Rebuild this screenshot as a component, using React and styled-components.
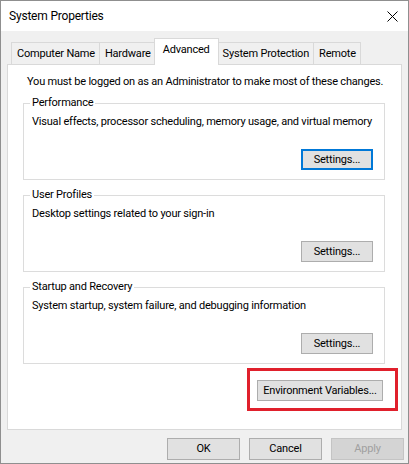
import React from 'react';
import styled, { createGlobalStyle, css } from 'styled-components';

const Global = createGlobalStyle`
    html, body {
        margin: 0;
        padding: 0;
        background: #ffffff;
    }
    * {
        box-sizing: border-box;
    }
`;

const Window = styled.div`
    width: 409px;
    height: 464px;
    border: 1px solid #8f8f8f;
    background: #f0f0f0;
    display: flex;
    flex-direction: column;
    font-family: Roboto, "Liberation Sans", sans-serif;
    font-size: 11px;
    letter-spacing: -0.2px;
    line-height: 16px;
    color: #000;
    overflow: hidden;
`;

const TitleBar = styled.div`
    height: 30px;
    background: #ffffff;
    display: flex;
    align-items: center;
    justify-content: space-between;
    padding: 0 6px 0 8px;
    flex-shrink: 0;
`;

const Title = styled.span`
    font-size: 12px;
`;

const CloseButton = styled.div`
    width: 20px;
    height: 20px;
    display: flex;
    align-items: center;
    justify-content: center;
`;

const Content = styled.div`
    padding: 7px 5px 0 6px;
    display: flex;
    flex-direction: column;
`;

const TabStrip = styled.div`
    display: flex;
    align-items: flex-end;
    height: 26px;
    padding-left: 5px;
`;

const Tab = styled.div`
    height: 22px;
    padding: 0 4px 0 5px;
    margin-left: -1px;
    border: 1px solid #d9d9d9;
    border-bottom: none;
    background: #f0f0f0;
    display: flex;
    align-items: center;
    white-space: nowrap;
    ${props => props.active && css`
        height: 27px;
        margin: 0 -1px -1px -2px;
        padding: 0 8px 4px 8px;
        background: #ffffff;
        position: relative;
        z-index: 1;
    `}
`;

const Panel = styled.div`
    width: 395px;
    height: 366px;
    flex-shrink: 0;
    background: #ffffff;
    border: 1px solid #d9d9d9;
    padding: 9px 3px 0 15px;
    display: flex;
    flex-direction: column;
`;

const Intro = styled.div`
    margin-left: 4px;
    white-space: nowrap;
`;

const Group = styled.fieldset`
    margin: ${props => props.first ? 5 : 7}px 13px 0 0;
    border: 1px solid #dcdcdc;
    padding: 0 11px 9px 8px;
    min-width: 0;
`;

const Legend = styled.legend`
    padding: 0 2px;
    margin-left: -2px;
`;

const Description = styled.div`
    margin-top: 3px;
    white-space: nowrap;
`;

const ButtonRow = styled.div`
    display: flex;
    justify-content: flex-end;
    margin-top: ${props => props.gap === undefined ? 19 : props.gap}px;
`;

const Button = styled.button`
    width: ${props => props.width || 73}px;
    height: ${props => props.height || 21}px;
    background: #e1e1e1;
    border: 1px solid #adadad;
    font-family: inherit;
    font-size: inherit;
    letter-spacing: inherit;
    line-height: 16px;
    color: #000;
    padding: 0;
    white-space: nowrap;
    ${props => props.focused && css`
        border: 2px solid #0078d7;
    `}
    ${props => props.disabled && css`
        background: #d4d4d4;
        border-color: #c4c4c4;
        color: #a0a0a0;
    `}
`;

const Highlight = styled.div`
    border: 3px solid #e0202c;
    padding: 9px 12px 7px 7px;
    margin-top: 4px;
`;

const Footer = styled.div`
    display: flex;
    justify-content: flex-end;
    gap: 9px;
    margin-top: 8px;
    padding-right: 4px;
    margin-right: -5px;
`;

const groups = [
    {
        title: 'Performance',
        text: 'Visual effects, processor scheduling, memory usage, and virtual memory',
        focused: true
    },
    {
        title: 'User Profiles',
        text: 'Desktop settings related to your sign-in'
    },
    {
        title: 'Startup and Recovery',
        text: 'System startup, system failure, and debugging information'
    }
];

const tabs = ['Computer Name', 'Hardware', 'Advanced', 'System Protection', 'Remote'];

export default function App () {
    return (
        <React.Fragment>
            <Global />
            <Window>
                <TitleBar>
                    <Title>System Properties</Title>
                    <CloseButton>
                        <svg width="11" height="11" viewBox="0 0 11 11">
                            <path d="M0.5 0.5 L10.5 10.5 M10.5 0.5 L0.5 10.5" stroke="#000" strokeWidth="1" fill="none" />
                        </svg>
                    </CloseButton>
                </TitleBar>
                <Content>
                    <TabStrip>
                        {tabs.map(name => (
                            <Tab key={name} active={name === 'Advanced'}>{name}</Tab>
                        ))}
                    </TabStrip>
                    <Panel>
                        <Intro>You must be logged on as an Administrator to make most of these changes.</Intro>
                        {groups.map((group, index) => (
                            <Group key={group.title} first={index === 0}>
                                <Legend>{group.title}</Legend>
                                <Description>{group.text}</Description>
                                <ButtonRow>
                                    <Button width={72} focused={group.focused}>Settings...</Button>
                                </ButtonRow>
                            </Group>
                        ))}
                        <ButtonRow gap={0}>
                            <Highlight>
                                <Button width={126}>Environment Variables...</Button>
                            </Highlight>
                        </ButtonRow>
                    </Panel>
                    <Footer>
                        <Button height={22}>OK</Button>
                        <Button height={22}>Cancel</Button>
                        <Button height={22} disabled>Apply</Button>
                    </Footer>
                </Content>
            </Window>
        </React.Fragment>
    );
}
